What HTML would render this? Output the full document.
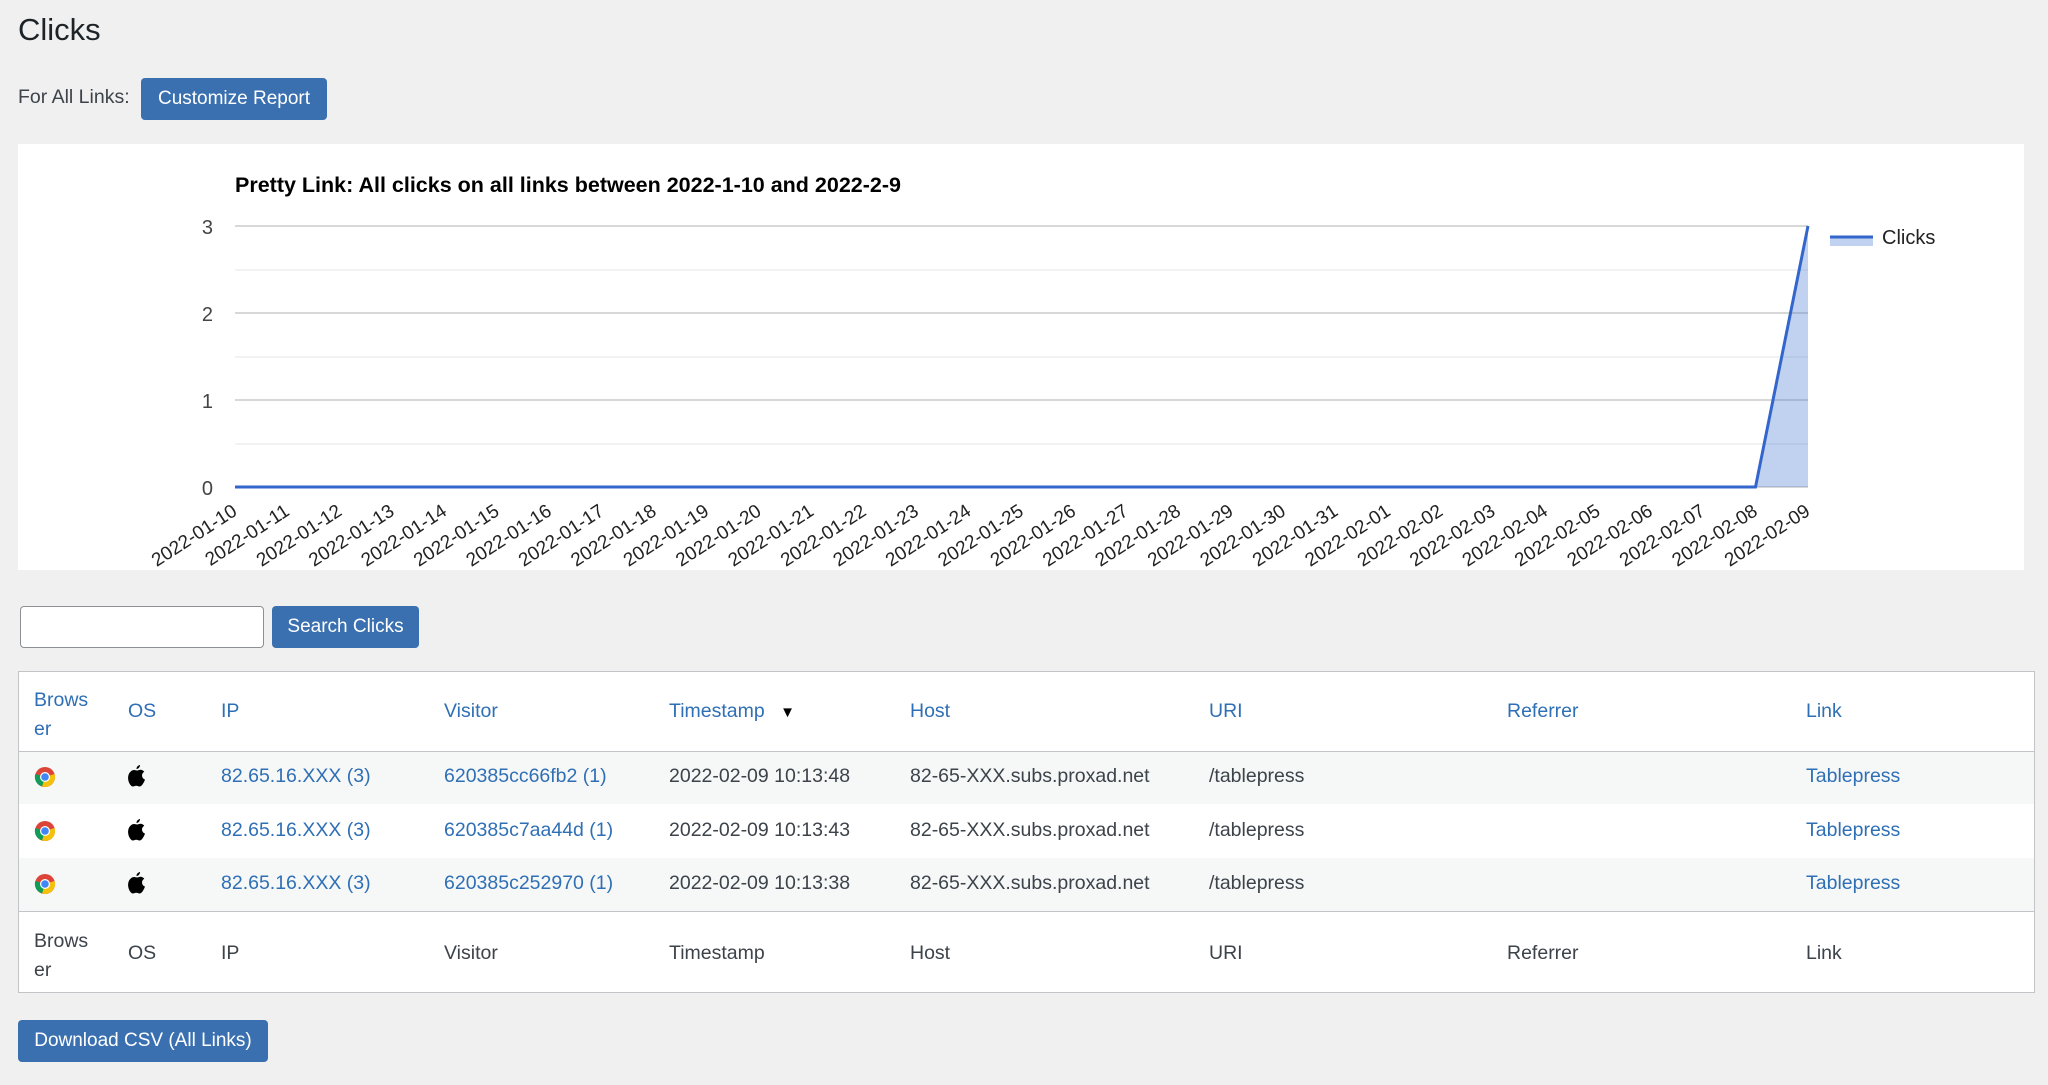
<!DOCTYPE html>
<html><head><meta charset="utf-8"><style>
body{margin:0;width:2048px;height:1085px;background:#f0f0f1;font-family:"Liberation Sans",sans-serif;color:#3c434a;position:relative;overflow:hidden}
.a{position:absolute;white-space:nowrap}
.btn{position:absolute;background:#3a70b0;color:#fff;border-radius:4px;font-size:19px;display:flex;align-items:center;justify-content:center}
.lk{color:#2f6fb5}
.t{font-size:19.5px}
</style></head><body>
<div class="a" style="left:18px;top:12px;font-size:31px;color:#1d2327">Clicks</div>
<div class="a t" style="left:18px;top:86px">For All Links:</div>
<div class="btn" style="left:141px;top:78px;width:186px;height:42px">Customize Report</div>
<div class="a" style="left:18px;top:144px;width:2006px;height:426px;background:#fff"></div>
<svg class="a" style="left:0;top:0" width="2048" height="600" font-family="Liberation Sans, sans-serif">
<text x="235" y="192" font-size="21.5" font-weight="bold" fill="#000">Pretty Link: All clicks on all links between 2022-1-10 and 2022-2-9</text>
<g stroke="#ebebeb" stroke-width="1.3"><line x1="235" x2="1808" y1="270" y2="270"/><line x1="235" x2="1808" y1="357" y2="357"/><line x1="235" x2="1808" y1="444" y2="444"/></g>
<g stroke="#cccccc" stroke-width="1.5"><line x1="235" x2="1808" y1="226" y2="226"/><line x1="235" x2="1808" y1="313" y2="313"/><line x1="235" x2="1808" y1="400" y2="400"/><line x1="235" x2="1808" y1="487" y2="487"/></g>
<polygon points="1755.5,487 1808,226 1808,487" fill="#3366cc" fill-opacity="0.3"/>
<polyline points="235,487 1755.5,487 1808,226" fill="none" stroke="#3366cc" stroke-width="3"/>
<g font-size="20" fill="#444" text-anchor="end"><text x="213" y="234">3</text><text x="213" y="321">2</text><text x="213" y="408">1</text><text x="213" y="495">0</text></g>
<line x1="1830" x2="1873" y1="237" y2="237" stroke="#3366cc" stroke-width="3"/><rect x="1830" y="238" width="43" height="8" fill="#3366cc" fill-opacity="0.3"/>
<text x="1882" y="244" font-size="20" fill="#222">Clicks</text>
<g font-size="19" fill="#222" text-anchor="end">
<text transform="translate(231,503) rotate(-33)" dy="0.7em">2022-01-10</text>
<text transform="translate(283.4,503) rotate(-33)" dy="0.7em">2022-01-11</text>
<text transform="translate(335.9,503) rotate(-33)" dy="0.7em">2022-01-12</text>
<text transform="translate(388.3,503) rotate(-33)" dy="0.7em">2022-01-13</text>
<text transform="translate(440.7,503) rotate(-33)" dy="0.7em">2022-01-14</text>
<text transform="translate(493.2,503) rotate(-33)" dy="0.7em">2022-01-15</text>
<text transform="translate(545.6,503) rotate(-33)" dy="0.7em">2022-01-16</text>
<text transform="translate(598,503) rotate(-33)" dy="0.7em">2022-01-17</text>
<text transform="translate(650.4,503) rotate(-33)" dy="0.7em">2022-01-18</text>
<text transform="translate(702.9,503) rotate(-33)" dy="0.7em">2022-01-19</text>
<text transform="translate(755.3,503) rotate(-33)" dy="0.7em">2022-01-20</text>
<text transform="translate(807.7,503) rotate(-33)" dy="0.7em">2022-01-21</text>
<text transform="translate(860.2,503) rotate(-33)" dy="0.7em">2022-01-22</text>
<text transform="translate(912.6,503) rotate(-33)" dy="0.7em">2022-01-23</text>
<text transform="translate(965,503) rotate(-33)" dy="0.7em">2022-01-24</text>
<text transform="translate(1017.5,503) rotate(-33)" dy="0.7em">2022-01-25</text>
<text transform="translate(1069.9,503) rotate(-33)" dy="0.7em">2022-01-26</text>
<text transform="translate(1122.3,503) rotate(-33)" dy="0.7em">2022-01-27</text>
<text transform="translate(1174.7,503) rotate(-33)" dy="0.7em">2022-01-28</text>
<text transform="translate(1227.2,503) rotate(-33)" dy="0.7em">2022-01-29</text>
<text transform="translate(1279.6,503) rotate(-33)" dy="0.7em">2022-01-30</text>
<text transform="translate(1332,503) rotate(-33)" dy="0.7em">2022-01-31</text>
<text transform="translate(1384.5,503) rotate(-33)" dy="0.7em">2022-02-01</text>
<text transform="translate(1436.9,503) rotate(-33)" dy="0.7em">2022-02-02</text>
<text transform="translate(1489.3,503) rotate(-33)" dy="0.7em">2022-02-03</text>
<text transform="translate(1541.8,503) rotate(-33)" dy="0.7em">2022-02-04</text>
<text transform="translate(1594.2,503) rotate(-33)" dy="0.7em">2022-02-05</text>
<text transform="translate(1646.6,503) rotate(-33)" dy="0.7em">2022-02-06</text>
<text transform="translate(1699,503) rotate(-33)" dy="0.7em">2022-02-07</text>
<text transform="translate(1751.5,503) rotate(-33)" dy="0.7em">2022-02-08</text>
<text transform="translate(1804,503) rotate(-33)" dy="0.7em">2022-02-09</text>
</g></svg>
<div class="a" style="left:20px;top:606px;width:242px;height:40px;background:#fff;border:1px solid #8c8f94;border-radius:4px"></div>
<div class="btn" style="left:272px;top:606px;width:147px;height:42px">Search Clicks</div>
<div class="a" style="left:18px;top:671px;width:2015px;height:320px;background:#fff;border:1px solid #c3c4c7"></div>
<div class="a" style="left:19px;top:751px;width:2015px;height:1px;background:#c3c4c7"></div>
<div class="a" style="left:19px;top:752px;width:2015px;height:52px;background:#f6f7f7"></div>
<div class="a" style="left:19px;top:858px;width:2015px;height:53px;background:#f6f7f7"></div>
<div class="a" style="left:19px;top:911px;width:2015px;height:1px;background:#c3c4c7"></div>
<div class="t lk">
<div class="a" style="left:34px;top:686px;line-height:29px">Brows<br>er</div>
<div class="a" style="left:128px;top:700px">OS</div><div class="a" style="left:221px;top:700px">IP</div>
<div class="a" style="left:444px;top:700px">Visitor</div><div class="a" style="left:669px;top:700px">Timestamp <span style="color:#000;font-size:15px;margin-left:10px">▼</span></div>
<div class="a" style="left:910px;top:700px">Host</div><div class="a" style="left:1209px;top:700px">URI</div>
<div class="a" style="left:1507px;top:700px">Referrer</div><div class="a" style="left:1806px;top:700px">Link</div>
</div>
<div class="t" style="color:#3c434a">
<div class="a" style="left:34px;top:927px;line-height:29px">Brows<br>er</div>
<div class="a" style="left:128px;top:942px">OS</div><div class="a" style="left:221px;top:942px">IP</div>
<div class="a" style="left:444px;top:942px">Visitor</div><div class="a" style="left:669px;top:942px">Timestamp</div>
<div class="a" style="left:910px;top:942px">Host</div><div class="a" style="left:1209px;top:942px">URI</div>
<div class="a" style="left:1507px;top:942px">Referrer</div><div class="a" style="left:1806px;top:942px">Link</div>
</div>
<div class="t">
<div class="a" style="left:0;top:765px;width:2048px">
<svg class="a" style="left:34px;top:1px" width="22" height="22" viewBox="0 0 22 22"><circle cx="11" cy="11" r="10" fill="#db4437"/><path d="M11 11 L20.5 8 A10 10 0 0 1 8 20.5Z" fill="#f4c20d"/><path d="M11 11 L8 20.5 A10 10 0 0 1 1.3 8Z" fill="#0f9d58"/><circle cx="11" cy="11" r="5" fill="#fff"/><circle cx="11" cy="11" r="3.8" fill="#4285f4"/></svg>
<svg class="a" style="left:128px;top:0" width="18" height="22" viewBox="0 0 18 22"><path d="M12 0c0 2-1.5 4-3.5 4C8.4 2 10 .3 12 0zM9 5.5c1.2 0 2.3-.8 3.5-.8 1.5 0 3 .8 3.8 2.1-3.4 1.9-2.8 6.5.7 7.8-.6 1.7-1.3 3.1-2.2 4.4-.9 1.3-1.8 2.5-3.2 2.5-1.4 0-1.8-.8-3.3-.8-1.6 0-2 .8-3.4.8-1.4 0-2.4-1.4-3.2-2.6C-.6 15 -.6 9.4 2.6 6.6 3.7 5.6 4.9 5 6.1 5c1.3 0 2 .5 2.9.5z" fill="#000"/></svg>
<div class="a lk" style="left:221px;top:0">82.65.16.XXX (3)</div><div class="a lk" style="left:444px;top:0">620385cc66fb2 (1)</div>
<div class="a" style="left:669px;top:0">2022-02-09 10:13:48</div><div class="a" style="left:910px;top:0">82-65-XXX.subs.proxad.net</div>
<div class="a" style="left:1209px;top:0">/tablepress</div><div class="a lk" style="left:1806px;top:0">Tablepress</div></div>
<div class="a" style="left:0;top:819px;width:2048px">
<svg class="a" style="left:34px;top:1px" width="22" height="22" viewBox="0 0 22 22"><circle cx="11" cy="11" r="10" fill="#db4437"/><path d="M11 11 L20.5 8 A10 10 0 0 1 8 20.5Z" fill="#f4c20d"/><path d="M11 11 L8 20.5 A10 10 0 0 1 1.3 8Z" fill="#0f9d58"/><circle cx="11" cy="11" r="5" fill="#fff"/><circle cx="11" cy="11" r="3.8" fill="#4285f4"/></svg>
<svg class="a" style="left:128px;top:0" width="18" height="22" viewBox="0 0 18 22"><path d="M12 0c0 2-1.5 4-3.5 4C8.4 2 10 .3 12 0zM9 5.5c1.2 0 2.3-.8 3.5-.8 1.5 0 3 .8 3.8 2.1-3.4 1.9-2.8 6.5.7 7.8-.6 1.7-1.3 3.1-2.2 4.4-.9 1.3-1.8 2.5-3.2 2.5-1.4 0-1.8-.8-3.3-.8-1.6 0-2 .8-3.4.8-1.4 0-2.4-1.4-3.2-2.6C-.6 15 -.6 9.4 2.6 6.6 3.7 5.6 4.9 5 6.1 5c1.3 0 2 .5 2.9.5z" fill="#000"/></svg>
<div class="a lk" style="left:221px;top:0">82.65.16.XXX (3)</div><div class="a lk" style="left:444px;top:0">620385c7aa44d (1)</div>
<div class="a" style="left:669px;top:0">2022-02-09 10:13:43</div><div class="a" style="left:910px;top:0">82-65-XXX.subs.proxad.net</div>
<div class="a" style="left:1209px;top:0">/tablepress</div><div class="a lk" style="left:1806px;top:0">Tablepress</div></div>
<div class="a" style="left:0;top:872px;width:2048px">
<svg class="a" style="left:34px;top:1px" width="22" height="22" viewBox="0 0 22 22"><circle cx="11" cy="11" r="10" fill="#db4437"/><path d="M11 11 L20.5 8 A10 10 0 0 1 8 20.5Z" fill="#f4c20d"/><path d="M11 11 L8 20.5 A10 10 0 0 1 1.3 8Z" fill="#0f9d58"/><circle cx="11" cy="11" r="5" fill="#fff"/><circle cx="11" cy="11" r="3.8" fill="#4285f4"/></svg>
<svg class="a" style="left:128px;top:0" width="18" height="22" viewBox="0 0 18 22"><path d="M12 0c0 2-1.5 4-3.5 4C8.4 2 10 .3 12 0zM9 5.5c1.2 0 2.3-.8 3.5-.8 1.5 0 3 .8 3.8 2.1-3.4 1.9-2.8 6.5.7 7.8-.6 1.7-1.3 3.1-2.2 4.4-.9 1.3-1.8 2.5-3.2 2.5-1.4 0-1.8-.8-3.3-.8-1.6 0-2 .8-3.4.8-1.4 0-2.4-1.4-3.2-2.6C-.6 15 -.6 9.4 2.6 6.6 3.7 5.6 4.9 5 6.1 5c1.3 0 2 .5 2.9.5z" fill="#000"/></svg>
<div class="a lk" style="left:221px;top:0">82.65.16.XXX (3)</div><div class="a lk" style="left:444px;top:0">620385c252970 (1)</div>
<div class="a" style="left:669px;top:0">2022-02-09 10:13:38</div><div class="a" style="left:910px;top:0">82-65-XXX.subs.proxad.net</div>
<div class="a" style="left:1209px;top:0">/tablepress</div><div class="a lk" style="left:1806px;top:0">Tablepress</div></div>
</div>
<div class="btn" style="left:18px;top:1020px;width:250px;height:42px">Download CSV (All Links)</div>
</body></html>
